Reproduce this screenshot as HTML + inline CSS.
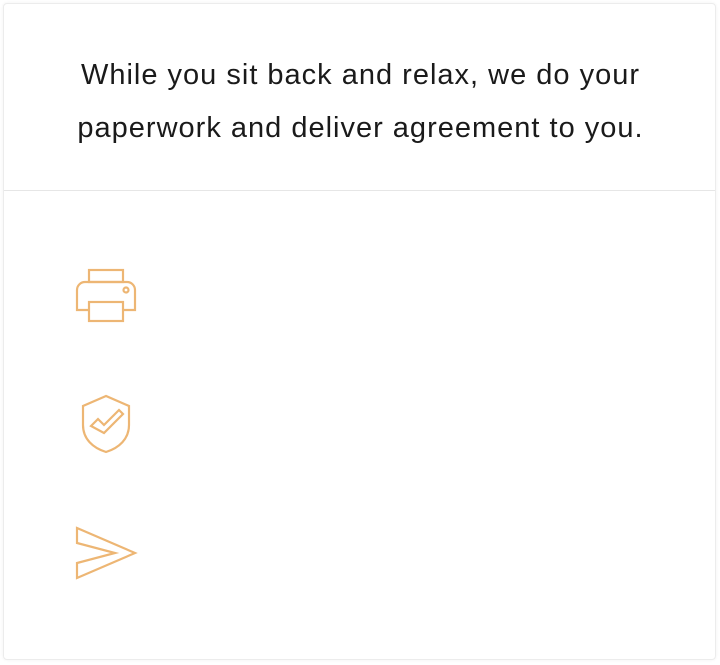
<!DOCTYPE html>
<html><head><style>
body{margin:0;background:#fff;width:720px;height:665px;overflow:hidden;font-family:"Liberation Sans",sans-serif}
.card{position:absolute;left:3px;top:3px;width:713px;height:657px;border:1px solid #ececec;border-radius:4px;box-shadow:0 0 3px rgba(0,0,0,0.06);box-sizing:border-box}
.txt{position:absolute;left:0;width:713px;top:45px;text-align:center;font-size:29px;line-height:53px;color:#1a1a1a;letter-spacing:1px;white-space:nowrap}
.hr{position:absolute;left:0;right:0;top:186px;border-top:1px solid #e6e6e6}
svg{position:absolute;fill:none;stroke:#EDB674;stroke-width:2.2}
</style></head><body>
<div class="card">
<div class="txt">While you sit back and relax, we do your<br>paperwork and deliver agreement to you.</div>
<div class="hr"></div>
</div>
<svg style="left:70px;top:262px" width="72" height="66" viewBox="0 0 72 66">
<rect x="19" y="8" width="34" height="12"/>
<path d="M19 48H7V28a8 8 0 0 1 8-8h42a8 8 0 0 1 8 8v20H53"/>
<rect x="19" y="40" width="34" height="19"/>
<circle cx="56" cy="28" r="2.5"/>
</svg>
<svg style="left:75px;top:390px" width="62" height="68" viewBox="0 0 62 68">
<path d="M31 6L8 16v19c0 14 10 23 23 27c13-4 23-13 23-27V16z"/>
<path d="M16 36l7-7 6 6 15-15 4 4-19 19z"/>
</svg>
<svg style="left:70px;top:522px" width="72" height="62" viewBox="0 0 72 62">
<path d="M7 6l58 25-58 25V41l38-10-38-10z"/>
</svg>
</body></html>
